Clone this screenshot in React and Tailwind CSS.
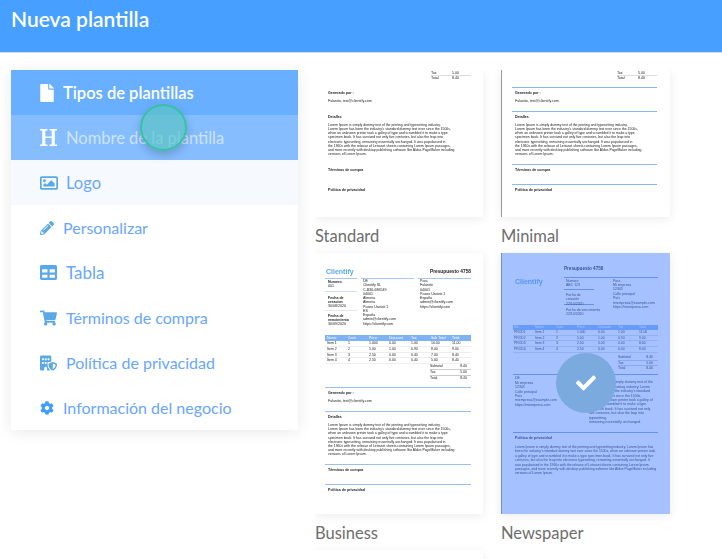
import { FaFile, FaRegImage, FaPencilAlt, FaTable, FaShoppingCart, FaCog, FaCheck } from "react-icons/fa";
import { FaBuildingShield } from "react-icons/fa6";

// slab H, the icon packages only have a much heavier one
function SlabH({ className }) {
  return (
    <svg viewBox="0 0 17 17" className={className} fill="currentColor">
      <path d="M0 0h7.5v1.6H5.3v5.9h6.4V1.6H9.5V0H17v1.6h-2.2v13.8H17V17H9.5v-1.6h2.2V9.1H5.3v6.3h2.2V17H0v-1.6h2.2V1.6H0z" />
    </svg>
  );
}

const menu = [
  { label: "Tipos de plantillas", Icon: FaFile, icon: "w-[14px] h-[18px] text-white", row: "bg-[#69afff] text-white font-semibold text-[16.5px]", text: "pt-[2px]" },
  { label: "Nombre de la plantilla", Icon: SlabH, icon: "w-[17px] h-[17px] text-white", row: "bg-[#85bdff] text-white/60 text-[16.5px]", text: "pt-[2px]" },
  { label: "Logo", Icon: FaRegImage, icon: "w-[18px] h-[18px] text-[#5aa9e6]", row: "bg-[#f6faff] text-[#69a6ff] text-[16.5px]", text: "pt-[2px] -ml-[1px]" },
  { label: "Personalizar", Icon: FaPencilAlt, icon: "w-[14px] h-[14px] text-[#5aa9e6]", row: "text-[#69a6ff] text-[16px]", text: "" },
  { label: "Tabla", Icon: FaTable, icon: "w-[17px] h-[17px] text-[#5aa9e6]", row: "text-[#69a6ff] text-[17px]", text: "" },
  { label: "Términos de compra", Icon: FaShoppingCart, icon: "w-[17px] h-[16px] text-[#5aa9e6]", row: "text-[#69a6ff] text-[16px]", text: "" },
  { label: "Política de privacidad", Icon: FaBuildingShield, icon: "w-[17px] h-[16px] text-[#5aa9e6]", row: "text-[#69a6ff] text-[16px]", text: "" },
  { label: "Información del negocio", Icon: FaCog, icon: "w-[14px] h-[14px] text-[#3f9dfb]", row: "text-[#69a6ff] text-[16px]", text: "" },
];

const lorem = [
  "Lorem Ipsum is simply dummy text of the printing and typesetting industry.",
  "Lorem Ipsum has been the industry's standard dummy text ever since the 1500s,",
  "when an unknown printer took a galley of type and scrambled it to make a type",
  "specimen book. It has survived not only five centuries, but also the leap into",
  "electronic typesetting, remaining essentially unchanged. It was popularised in",
  "the 1960s with the release of Letraset sheets containing Lorem Ipsum passages,",
  "and more recently with desktop publishing software like Aldus PageMaker including",
  "versions of Lorem Ipsum.",
];

const rows = [
  ["Item 1", "1", "1.000", "0.00", "1.00", "10.00", "11.00"],
  ["Item 2", "2", "5.00", "1.00", "0.90", "8.00", "9.00"],
  ["Item 3", "3", "2.50", "0.00", "0.40", "7.00", "8.40"],
  ["Item 4", "4", "2.50", "0.00", "0.40", "5.00", "8.40"],
];

const paperRows = [
  ["PROD1", "Item 1", "1", "1.000", "0.00", "1.00", "11.00"],
  ["PROD2", "Item 2", "2", "5.00", "1.00", "0.90", "9.00"],
  ["PROD3", "Item 3", "3", "2.50", "0.00", "0.40", "8.40"],
  ["PROD4", "Item 4", "4", "2.50", "0.00", "0.40", "8.40"],
];

function Lines({ items, className = "" }) {
  return (
    <div className={className}>
      {items.map((t) => (
        <div key={t} className="whitespace-nowrap">{t}</div>
      ))}
    </div>
  );
}

function Tail({ rule, ruleCls = "bg-[#8fb6ee]" }) {
  const line = rule ? <div className={`h-[1px] ${ruleCls}`} /> : <div className="h-[1px]" />;
  return (
    <div className="text-[3.6px] leading-[5px] text-[#222]">
      {line}
      <div className="px-[3px] pt-[3px] h-[23px]">
        <div className="font-bold">Generado por :</div>
        <div className="mt-[2.5px]">Fulanito, test@clientify.com</div>
      </div>
      {line}
      <div className="px-[3px] pt-[3px] h-[52px]">
        <div className="font-bold">Detalles</div>
        <Lines items={lorem} className="mt-[3px] text-[3.45px] leading-[4.13px]" />
      </div>
      {line}
      <div className="px-[3px] pt-[3px] h-[19px] font-bold">Términos de compra</div>
      {line}
      <div className="px-[3px] pt-[3px] font-bold">Política de privacidad</div>
    </div>
  );
}

function TopTotals() {
  return (
    <div className="flex justify-end text-[3.6px] text-[#222]">
      <div className="w-[40px]">
        <div className="flex gap-[14px] border-b border-[#ddd] leading-[4px]"><span className="w-[7px]">Tax</span><span>5.00</span></div>
        <div className="flex gap-[14px] leading-[5px]"><span className="w-[7px]">Total</span><span>8.40</span></div>
      </div>
    </div>
  );
}

function Standard() {
  return (
    <div className="h-[147px] bg-white shadow-[0_2px_10px_rgba(0,0,0,0.08)] flex flex-col justify-end pb-[24px] pl-[10px] pr-[12px] blur-[0.35px]">
      <TopTotals />
      <div className="mt-[6px]"><Tail /></div>
    </div>
  );
}

function Minimal() {
  return (
    <div className="h-[147px] bg-white border-l border-[#999] shadow-[0_2px_10px_rgba(0,0,0,0.08)] flex flex-col justify-end pb-[24px] pl-[10px] pr-[13px] blur-[0.35px]">
      <TopTotals />
      <div className="mt-[6px]"><Tail rule /></div>
    </div>
  );
}

function Business() {
  const head = ["Name", "Cant.", "Price", "Discount", "Tax", "Sub Total", "Total"];
  return (
    <div className="h-[261px] bg-white shadow-[0_2px_10px_rgba(0,0,0,0.08)] pl-[10px] pr-[12px] pt-[12px] blur-[0.35px] text-[#222]">
      <div className="flex items-center justify-between h-[13px]">
        <span className="text-[7px] font-bold text-[#5aa9e6] pl-[1px] pt-[1px]">Clientify</span>
        <span className="text-[4.8px] font-bold text-[#222]">Presupuesto 4758</span>
      </div>
      <div className="flex gap-[4px] h-[56px] text-[3.6px]">
        <div className="w-[32px] border-t border-[#a9c6f0] leading-[4.2px]">
          <div className="px-[3px] pt-[1px] h-[13px] border-b border-[#cfe0f5]">
            <div className="font-bold">Numero</div><div>001</div>
          </div>
          <div className="px-[3px] pt-[4px] h-[19px] border-b border-[#e5e5e5]">
            <div className="font-bold">Fecha de</div><div className="font-bold">creacion</div><div>30/08/2020</div>
          </div>
          <div className="px-[3px] pt-[3px]">
            <div className="font-bold">Fecha de</div><div className="font-bold">vencimiento</div><div>30/09/2020</div>
          </div>
        </div>
        <div className="w-[53px] border-t border-[#a9c6f0] pl-[2px] leading-[4.27px]">
          <Lines items={["DE", "Clientify SL", "C-B36-686549", "04001", "Almeria", "Almeria ", "Paseo Usatati 1", "ES", "España", "admin@clientify.com", "https://clientify.com"]} />
        </div>
        <div className="w-[53px] border-t border-[#a9c6f0] pl-[2px] leading-[4.3px]">
          <Lines items={["Para", "Fulanito", "04001", "Paseo Usatati 1", "España", "admin@clientify.com", "https://clientify.com"]} />
        </div>
      </div>
      <div className="mt-[1px] text-[3.5px] leading-[4.8px]">
        <div className="grid grid-cols-[21px_21px_20px_22px_20px_21px_1fr] h-[6px] leading-[6px] bg-[#7fb2f2] text-white pl-[2px]">
          {head.map((h) => <span key={h}>{h}</span>)}
        </div>
        {rows.map((r) => (
          <div key={r[0]} className="grid grid-cols-[21px_21px_20px_22px_20px_21px_1fr] pl-[2px] border-b border-[#eee]">
            {r.map((c, i) => <span key={i}>{c}</span>)}
          </div>
        ))}
      </div>
      <div className="ml-auto w-[41px] text-[3.5px] leading-[5px]">
        <div className="flex justify-between border-b border-[#ccc] pr-[4px]"><span>Subtotal</span><span>8.40</span></div>
        <div className="flex justify-between border-b border-[#ccc] pr-[4px]"><span>Tax</span><span>5.00</span></div>
        <div className="flex justify-between pr-[4px]"><span>Total</span><span>8.40</span></div>
      </div>
      <div className="mt-[6px]"><Tail rule ruleCls="bg-[#9cbeef]" /></div>
    </div>
  );
}

function Newspaper() {
  const head = ["No.", "Name", "Cant", "Price", "Discount", "Tax", "Total"];
  return (
    <div className="relative h-[261px] bg-white border-l border-[#6d8fd6] shadow-[0_2px_10px_rgba(0,0,0,0.08)] overflow-hidden">
      <div className="pl-[11px] pr-[12px] pt-[12px] text-[#222] blur-[0.35px]">
        <div className="flex">
          <div className="w-[51px] pt-[11px] pl-[2px] text-[7px] font-bold text-[#5aa9e6] leading-[12px]">Clientify</div>
          <div className="flex-1">
            <div className="text-[4.6px] font-bold h-[12px] leading-[8px]">Presupuesto 4758</div>
            <div className="flex border-t border-[#7a9fe0] h-[48px] text-[3.5px]">
              <div className="w-[49px] pl-[2px] leading-[4.4px]">
                <div className="h-[12px] pt-[1px] border-b border-[#7a9fe0] w-[30px] -ml-[2px] pl-[2px]"><div>Numero</div><div>ABC 123</div></div>
                <div className="h-[15px] pt-[3px] border-b border-[#7a9fe0] w-[30px] -ml-[2px] pl-[2px]"><div>Fecha de creación</div><div>22/10/2020</div></div>
                <div className="pt-[3px]"><div>Fecha de vencimiento</div><div>22/10/2020</div></div>
              </div>
              <Lines className="leading-[4.4px] pt-[0.5px]" items={["Para", "Mi empresa", "12345", "Calle principal", "País", "miempresa@example.com", "https://miempresa.com"]} />
            </div>
          </div>
        </div>
        <div className="text-[3.4px] leading-[4.7px]">
          <div className="grid grid-cols-[21px_21px_21px_21px_20px_21px_1fr] h-[5px] leading-[5px] bg-[#7fb2f2] text-white pl-[1px]">
            {head.map((h) => <span key={h}>{h}</span>)}
          </div>
          {paperRows.map((r) => (
            <div key={r[0]} className="grid grid-cols-[21px_21px_21px_21px_20px_21px_1fr] pl-[1px] border-b border-[#ddd]">
              {r.map((c, i) => <span key={i}>{c}</span>)}
            </div>
          ))}
        </div>
        <div className="ml-auto w-[40px] text-[3.5px] leading-[4.7px] mt-[2px]">
          <div className="flex justify-between border-b border-[#ccc] pr-[5px]"><span>Subtotal</span><span>8.40</span></div>
          <div className="flex justify-between border-b border-[#ccc] pr-[5px]"><span>Tax</span><span>5.00</span></div>
          <div className="flex justify-between pr-[5px]"><span>Total</span><span>8.40</span></div>
        </div>
        <div className="flex border-t border-[#7a9fe0] mt-[3.5px] h-[58px] text-[3.5px] leading-[4.4px]">
          <Lines className="w-[76px] pl-[2px] pt-[1px]" items={["DE", "Mi empresa", "12345", "Calle principal", "País", "miempresa@example.com", "https://miempresa.com"]} />
          <Lines className="pt-[5px]" items={[
            "Lorem Ipsum is simply dummy text of the",
            "printing and typesetting industry. Lorem",
            "Ipsum has been the industry's standard",
            "dummy text ever since the 1500s,",
            "when an unknown printer took a galley of",
            "type and scrambled it to make a type",
            "specimen book. It has survived not only",
            "five centuries, but also the leap into",
            "typesetting,",
            "remaining essentially unchanged.",
          ]} />
        </div>
        <div className="border-t border-[#7a9fe0] pt-[3px] pl-[2px] text-[3.6px] leading-[4.5px]">
          <div className="font-bold">Política de privacidad</div>
          <Lines className="mt-[4px] text-[3.4px] leading-[4.4px]" items={[
            "Lorem Ipsum is simply dummy text of the printing and typesetting industry. Lorem Ipsum has",
            "been the industry's standard dummy text ever since the 1500s, when an unknown printer took",
            "a galley of type and scrambled it to make a type specimen book. It has survived not only five",
            "centuries, but also the leap into electronic typesetting, remaining essentially unchanged. It",
            "was popularised in the 1960s with the release of Letraset sheets containing Lorem Ipsum",
            "passages, and more recently with desktop publishing software like Aldus PageMaker including",
            "versions of Lorem Ipsum.",
          ]} />
        </div>
      </div>
      <div className="absolute inset-0 bg-[rgba(77,132,255,0.5)]" />
      <div className="absolute left-[54px] top-[100px] w-[60px] h-[60px] rounded-full bg-[#7aaade] flex items-center justify-center">
        <FaCheck className="w-[20px] h-[20px] text-white" />
      </div>
    </div>
  );
}

function Card({ name, children }) {
  return (
    <div>
      {children}
      <div className="h-[36px] pt-[9px] font-['Lato',sans-serif] text-[16.5px] leading-[20px] text-[#6e6e6e]">{name}</div>
    </div>
  );
}

export default function App() {
  return (
    <div className="h-[559px] w-[722px] bg-white overflow-hidden font-['Lato','Noto_Sans',sans-serif]">
      <header className="h-[53px] bg-[#47a0ff] border-b border-[#ddd] px-[11px] pt-[4px] text-[21px] leading-[30px] font-semibold text-white">
        Nueva plantilla
      </header>
      <div className="flex h-[506px]">
        <div className="w-[315px] shrink-0 pl-[11px] pt-[17px]">
          <nav className="relative w-[287px] bg-white shadow-[0_2px_14px_rgba(0,0,0,0.09)]">
            {menu.map(({ label, Icon, icon, row, text }) => (
              <div key={label} className={`h-[45px] pl-[29px] flex items-center gap-[9px] ${row}`}>
                <Icon className={`shrink-0 ${icon}`} />
                <span className={text}>{label}</span>
              </div>
            ))}
            <div className="absolute left-[129px] top-[34px] w-[47px] h-[47px] rounded-full border-2 border-[#35c2a0] bg-[#5ac5c8]/70 shadow-[0_4px_10px_rgba(0,0,0,0.2)]" />
          </nav>
        </div>
        <div className="flex-1 mt-[17px] overflow-hidden font-['Liberation_Sans',sans-serif]">
          <div className="grid grid-cols-[168px_169px] gap-x-[18px]">
            <Card name="Standard"><Standard /></Card>
            <Card name="Minimal"><Minimal /></Card>
            <Card name="Business"><Business /></Card>
            <Card name="Newspaper"><Newspaper /></Card>
            <div className="h-[20px] bg-white shadow-[0_2px_10px_rgba(0,0,0,0.08)]" />
          </div>
        </div>
      </div>
    </div>
  );
}
